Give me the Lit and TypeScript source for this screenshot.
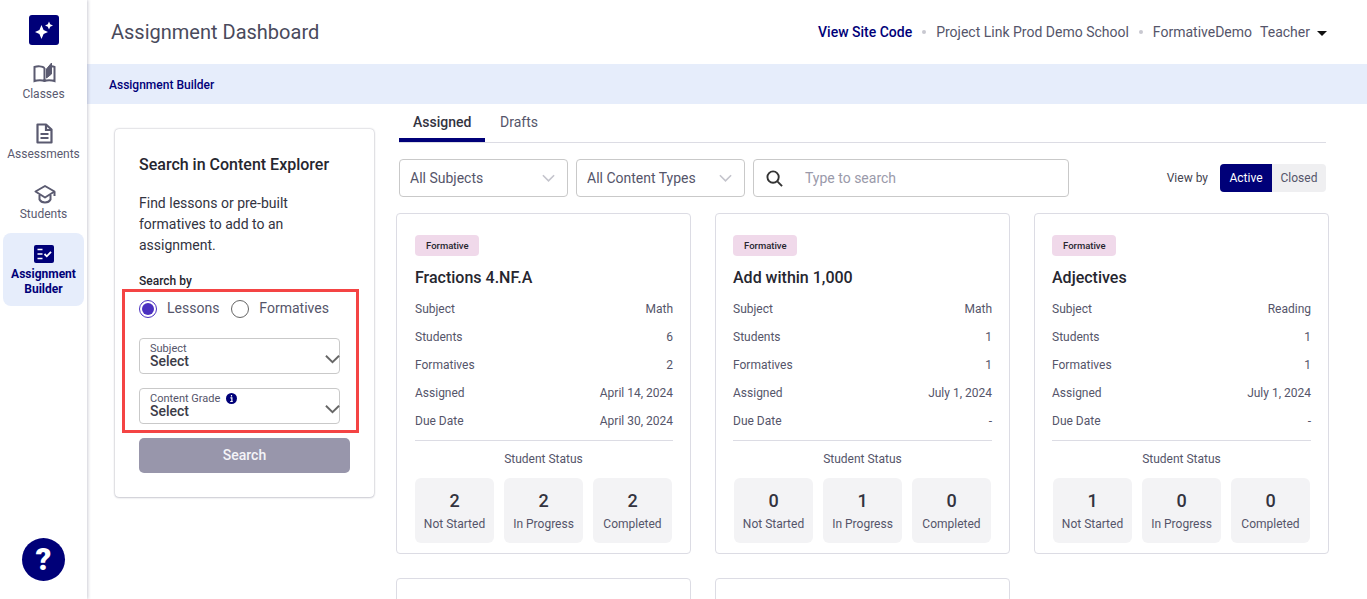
import { LitElement, html, css } from "lit";
import { customElement } from "lit/decorators.js";

const chevron = (cls: string) => html`<svg class=${cls} viewBox="0 0 16 10" fill="none" stroke="currentColor" stroke-width="2"><path d="M1 1.500 8 8.500 15 1.500"/></svg>`;

interface Card { title: string; subject: string; students: string; formatives: string; assigned: string; due: string; st: [string, string, string]; }
const cards: Card[] = [
  { title: "Fractions 4.NF.A", subject: "Math", students: "6", formatives: "2", assigned: "April 14, 2024", due: "April 30, 2024", st: ["2", "2", "2"] },
  { title: "Add within 1,000", subject: "Math", students: "1", formatives: "1", assigned: "July 1, 2024", due: "-", st: ["0", "1", "0"] },
  { title: "Adjectives", subject: "Reading", students: "1", formatives: "1", assigned: "July 1, 2024", due: "-", st: ["1", "0", "0"] },
];

@customElement("app-root")
export class AppRoot extends LitElement {
  static styles = css`
    :host { display: block; height: 100vh; overflow: hidden; background: #fff; font-family: Roboto, "Liberation Sans", sans-serif; color: #2f2f3a; position: relative; }
    * { box-sizing: border-box; }
    .app { display: flex; height: 599px; }
    .side { width: 87px; flex: none; display: flex; flex-direction: column; align-items: center; padding: 15px 3px 18px; background: #fff; box-shadow: 1px 0 3px rgba(60,60,90,.25); position: relative; z-index: 2; }
    .logo { width: 30px; height: 30px; border-radius: 3px; background: #000078; display: flex; align-items: center; justify-content: center; margin-bottom: 12px; flex: none; }
    .nav { width: 81px; height: 60px; flex: none; display: flex; flex-direction: column; align-items: center; color: #5a5a70; font-size: 12px; line-height: 15px; text-align: center; padding-top: 3px; }
    .nav svg { width: 24px; height: 24px; margin-bottom: 3px; overflow: visible; }
    .nav.active { height: 73px; background: #e6edfb; border-radius: 8px; color: #000078; font-weight: 700; padding-top: 10px; margin-top: -4px; }
    .nav.active svg { width: 22px; height: 22px; margin-bottom: 2px; }
    .help { margin-top: auto; width: 43px; height: 43px; border-radius: 50%; background: #000078; color: #fff; font-weight: 900; font-size: 31px; line-height: 43px; text-align: center; }
    .main { flex: 1; min-width: 0; display: flex; flex-direction: column; }
    .head { height: 64px; flex: none; display: flex; align-items: center; justify-content: space-between; padding: 0 40px 0 24px; }
    .head h1 { margin: 0; font-size: 20px; font-weight: 400; color: #4a4a5c; }
    .meta { display: flex; align-items: center; font-size: 14px; color: #55556a; }
    .meta .code { color: #000078; font-weight: 500; }
    .dot { width: 4px; height: 4px; border-radius: 50%; background: #c8c8d0; margin: 0 10px; }
    .role { margin-left: 8px; }
    .caret { width: 0; height: 0; border: 5px solid transparent; border-top: 5px solid #111; border-bottom: 0; margin-left: 7px; margin-top: 2px; }
    .crumb { height: 40px; flex: none; background: #e6edfb; display: flex; align-items: center; padding: 2px 0 0 22px; font-size: 12px; font-weight: 500; color: #000078; }
    .body { flex: 1; min-height: 0; display: flex; align-items: flex-start; }
    .panel { width: 259px; height: 368px; flex: none; margin: 25px 22px 0 28px; border-radius: 4px; background: #fff; box-shadow: 0 0 2px rgba(60,60,90,.45), 0 1px 2px rgba(60,60,90,.15); padding: 26px 24px 0; }
    .panel h2 { margin: 0; font-size: 16px; line-height: 19px; font-weight: 500; color: #26262f; }
    .panel p { margin: 19px 0 0; font-size: 14px; line-height: 21px; color: #33333f; width: 180px; }
    .by { margin-top: 18px; font-size: 12px; line-height: 15px; font-weight: 500; color: #26262f; }
    .radios { display: flex; align-items: center; height: 18px; margin-top: 11px; font-size: 14px; color: #55556a; }
    .radios span { margin-bottom: 2px; }
    .radio { width: 18px; height: 18px; border-radius: 50%; border: 1px solid #666; margin-right: 10px; flex: none; background: #fff; }
    .radio.on { border-color: #4b30c0; display: flex; align-items: center; justify-content: center; }
    .radio.on::after { content: ""; width: 12px; height: 12px; border-radius: 50%; background: #4b30c0; }
    .radios span + .radio { margin-left: 12px; }
    .sel { width: 201px; height: 36px; border: 1px solid #c9c9c9; border-radius: 4px; margin-top: 20px; padding: 4px 10px 0; position: relative; color: #3c3c48; }
    .sel + .sel { margin-top: 14px; }
    .sel label { display: flex; align-items: center; gap: 6px; font-size: 11px; line-height: 11px; color: #55556a; }
    .sel .v { font-size: 14px; line-height: 14px; font-weight: 500; }
    .sel .chev { position: absolute; right: -1px; top: 15px; width: 15px; height: 10px; color: #666; }
    .info { width: 11px; height: 11px; }
    .btn { width: 211px; height: 35px; margin-top: 14px; padding-bottom: 1px; border-radius: 5px; background: #9896ab; color: #f4f4f8; font-size: 14px; font-weight: 500; display: flex; align-items: center; justify-content: center; }
    .right { flex: 1; min-width: 0; padding-right: 38px; }
    .tabs { margin: 0 3px; height: 39px; border-bottom: 1px solid #dcdce4; display: flex; font-size: 14px; color: #55556a; }
    .tab { height: 38px; padding: 0 15px; line-height: 36px; }
    .tab.on { width: 86px; padding: 0 14px; border-bottom: 4px solid #000078; color: #33333f; font-weight: 500; }
    .filters { margin: 16px 3px 16px; display: flex; align-items: center; gap: 8px; font-size: 14px; color: #55556a; }
    .dd { width: 169px; height: 38px; border: 1px solid #c9c9c9; border-radius: 4px; display: flex; align-items: center; justify-content: space-between; padding: 0 12px 0 10px; }
    .dd .chev { width: 13px; height: 8px; color: #c4c4cc; }
    .search { width: 316px; height: 38px; border: 1px solid #c9c9c9; border-radius: 4px; display: flex; align-items: center; padding-left: 12px; color: #9a9aaa; }
    .search svg { width: 17px; height: 17px; margin-right: 22px; }
    .view { margin-left: auto; display: flex; align-items: center; font-size: 12px; color: #44444f; }
    .seg { display: flex; margin-left: 12px; height: 28px; border-radius: 4px; overflow: hidden; background: #efeff1; }
    .seg div { display: flex; align-items: center; justify-content: center; width: 54px; color: #55556a; }
    .seg .on { width: 52px; background: #000078; color: #fff; }
    .grid { display: grid; grid-template-columns: repeat(3, 295px); gap: 24px; }
    .card { height: 341px; border: 1px solid #dcdce4; border-radius: 4px; padding: 21px 17px 0; background: #fff; }
    .card:first-child { padding-left: 18px; }
    .card:first-child .status-t { padding-right: 1px; }
    .card:not(:first-child) .stats { margin-left: 1px; }
    .badge { display: inline-flex; align-items: center; height: 21px; padding: 0 10px 0 11px; background: #f0d9ea; border-radius: 4px; font-size: 9.500px; font-weight: 500; color: #26262f; vertical-align: top; }
    .title { margin-top: 12px; font-size: 16px; line-height: 20px; font-weight: 500; color: #26262f; height: 20px; }
    .rows { margin-top: 7px; font-size: 12px; color: #55556a; }
    .row { height: 28px; display: flex; align-items: center; justify-content: space-between; }
    .status-t { border-top: 1px solid #dcdce4; margin-top: 5px; padding-top: 11px; text-align: center; font-size: 12px; line-height: 14px; color: #55556a; }
    .stats { display: grid; grid-template-columns: repeat(3, 79px); gap: 10px; margin-top: 12px; }
    .stat { height: 65px; background: #f3f3f5; border-radius: 6px; text-align: center; padding-top: 12px; font-size: 12px; color: #55556a; }
    .stat b { display: block; font-size: 18px; line-height: 22px; font-weight: 500; color: #33333f; margin-bottom: 5px; }
    .mark { position: absolute; left: 122px; top: 289px; width: 237px; height: 144px; border: 3px solid #f44444; pointer-events: none; z-index: 3; }
  `;

  render() {
    return html`<div class="app">
      <aside class="side">
        <div class="logo"><svg width="22" height="22" viewBox="0 0 22 22" fill="#fff"><path d="M8.500 6 10.600 11 15 13 10.600 15 8.500 20 6.400 15 2 13 6.400 11Z"/><path d="M16 2.500 17.200 5.300 20 6.500 17.200 7.700 16 10.500 14.800 7.700 12 6.500 14.800 5.300Z"/></svg></div>
        <div class="nav"><svg viewBox="0 0 24 24" fill="none" stroke="#5a5a70" stroke-width="2"><g transform="translate(.5 1)"><path d="M12 7C10 5 5 5 2 6V20C5 19 10 19 12 20 14 19 19 19 22 20V6C21 5.600 20 5.400 19 5.300M12 7V20"/><path d="M14 8 19 2V13L14 17Z" fill="#5a5a70" stroke-width="1"/></g></svg>Classes</div>
        <div class="nav"><svg viewBox="0 0 24 24" fill="none" stroke="#5a5a70" stroke-width="2.200"><path d="M5.500 4.500H14L19.500 9.500V22.500H5.500Z" stroke-linejoin="round"/><path d="M14 5V10H19.500M8.500 14H16.500M8.500 18H16.500"/></svg>Assessments</div>
        <div class="nav"><svg viewBox="0 0 24 24" fill="none" stroke="#5a5a70" stroke-width="2"><path d="M13 6 22.500 11.500 13 17.500 3.500 11.500Z" stroke-linejoin="round"/><path d="M7.500 15V19.500C9.500 23.500 16.500 23.500 18.500 19.500V15M22.500 12V16"/></svg>Students</div>
        <div class="nav active"><svg viewBox="0 0 22 22"><rect width="20" height="18" x="1" y="2" rx="2" fill="#000078"/><path d="M4.500 6.500H9.500M4.500 11H9.500M4.500 15.500H9.500" stroke="#fff" stroke-width="1.500"/><path d="M11.500 11 13.800 13.300 18 8.800" fill="none" stroke="#fff" stroke-width="1.800"/></svg>Assignment Builder</div>
        <div class="help">?</div>
      </aside>
      <div class="main">
        <header class="head">
          <h1>Assignment Dashboard</h1>
          <div class="meta"><span class="code">View Site Code</span><i class="dot"></i><span>Project Link Prod Demo School</span><i class="dot"></i><span>FormativeDemo</span><span class="role">Teacher</span><i class="caret"></i></div>
        </header>
        <div class="crumb">Assignment Builder</div>
        <div class="body">
          <section class="panel">
            <h2>Search in Content Explorer</h2>
            <p>Find lessons or pre-built formatives to add to an assignment.</p>
            <div class="by">Search by</div>
            <div class="radios"><i class="radio on"></i><span>Lessons</span><i class="radio"></i><span>Formatives</span></div>
            <div class="sel"><label>Subject</label><div class="v">Select</div>${chevron("chev")}</div>
            <div class="sel"><label>Content Grade <svg class="info" viewBox="0 0 12 12"><circle cx="6" cy="6" r="6" fill="#000078"/><path d="M6 2.300V3.800M4.800 5.300H6.400V9M4.600 9.300H7.400" stroke="#fff" stroke-width="1.300" fill="none"/></svg></label><div class="v">Select</div>${chevron("chev")}</div>
            <div class="btn">Search</div>
          </section>
          <section class="right">
            <div class="tabs"><div class="tab on">Assigned</div><div class="tab">Drafts</div></div>
            <div class="filters">
              <div class="dd">All Subjects ${chevron("chev")}</div>
              <div class="dd">All Content Types ${chevron("chev")}</div>
              <div class="search"><svg viewBox="0 0 18 18" fill="none" stroke="#333" stroke-width="2"><circle cx="7.500" cy="7.500" r="6"/><path d="M12 12 17 17"/></svg>Type to search</div>
              <div class="view">View by<div class="seg"><div class="on">Active</div><div>Closed</div></div></div>
            </div>
            <div class="grid">
              ${cards.map((c) => html`<article class="card">
                <span class="badge">Formative</span>
                <div class="title">${c.title}</div>
                <div class="rows">
                  <div class="row"><span>Subject</span><span>${c.subject}</span></div>
                  <div class="row"><span>Students</span><span>${c.students}</span></div>
                  <div class="row"><span>Formatives</span><span>${c.formatives}</span></div>
                  <div class="row"><span>Assigned</span><span>${c.assigned}</span></div>
                  <div class="row"><span>Due Date</span><span>${c.due}</span></div>
                </div>
                <div class="status-t">Student Status</div>
                <div class="stats">
                  <div class="stat"><b>${c.st[0]}</b>Not Started</div>
                  <div class="stat"><b>${c.st[1]}</b>In Progress</div>
                  <div class="stat"><b>${c.st[2]}</b>Completed</div>
                </div>
              </article>`)}
              <article class="card"></article>
              <article class="card"></article>
            </div>
          </section>
        </div>
      </div>
    </div>
    <div class="mark"></div>`;
  }
}
